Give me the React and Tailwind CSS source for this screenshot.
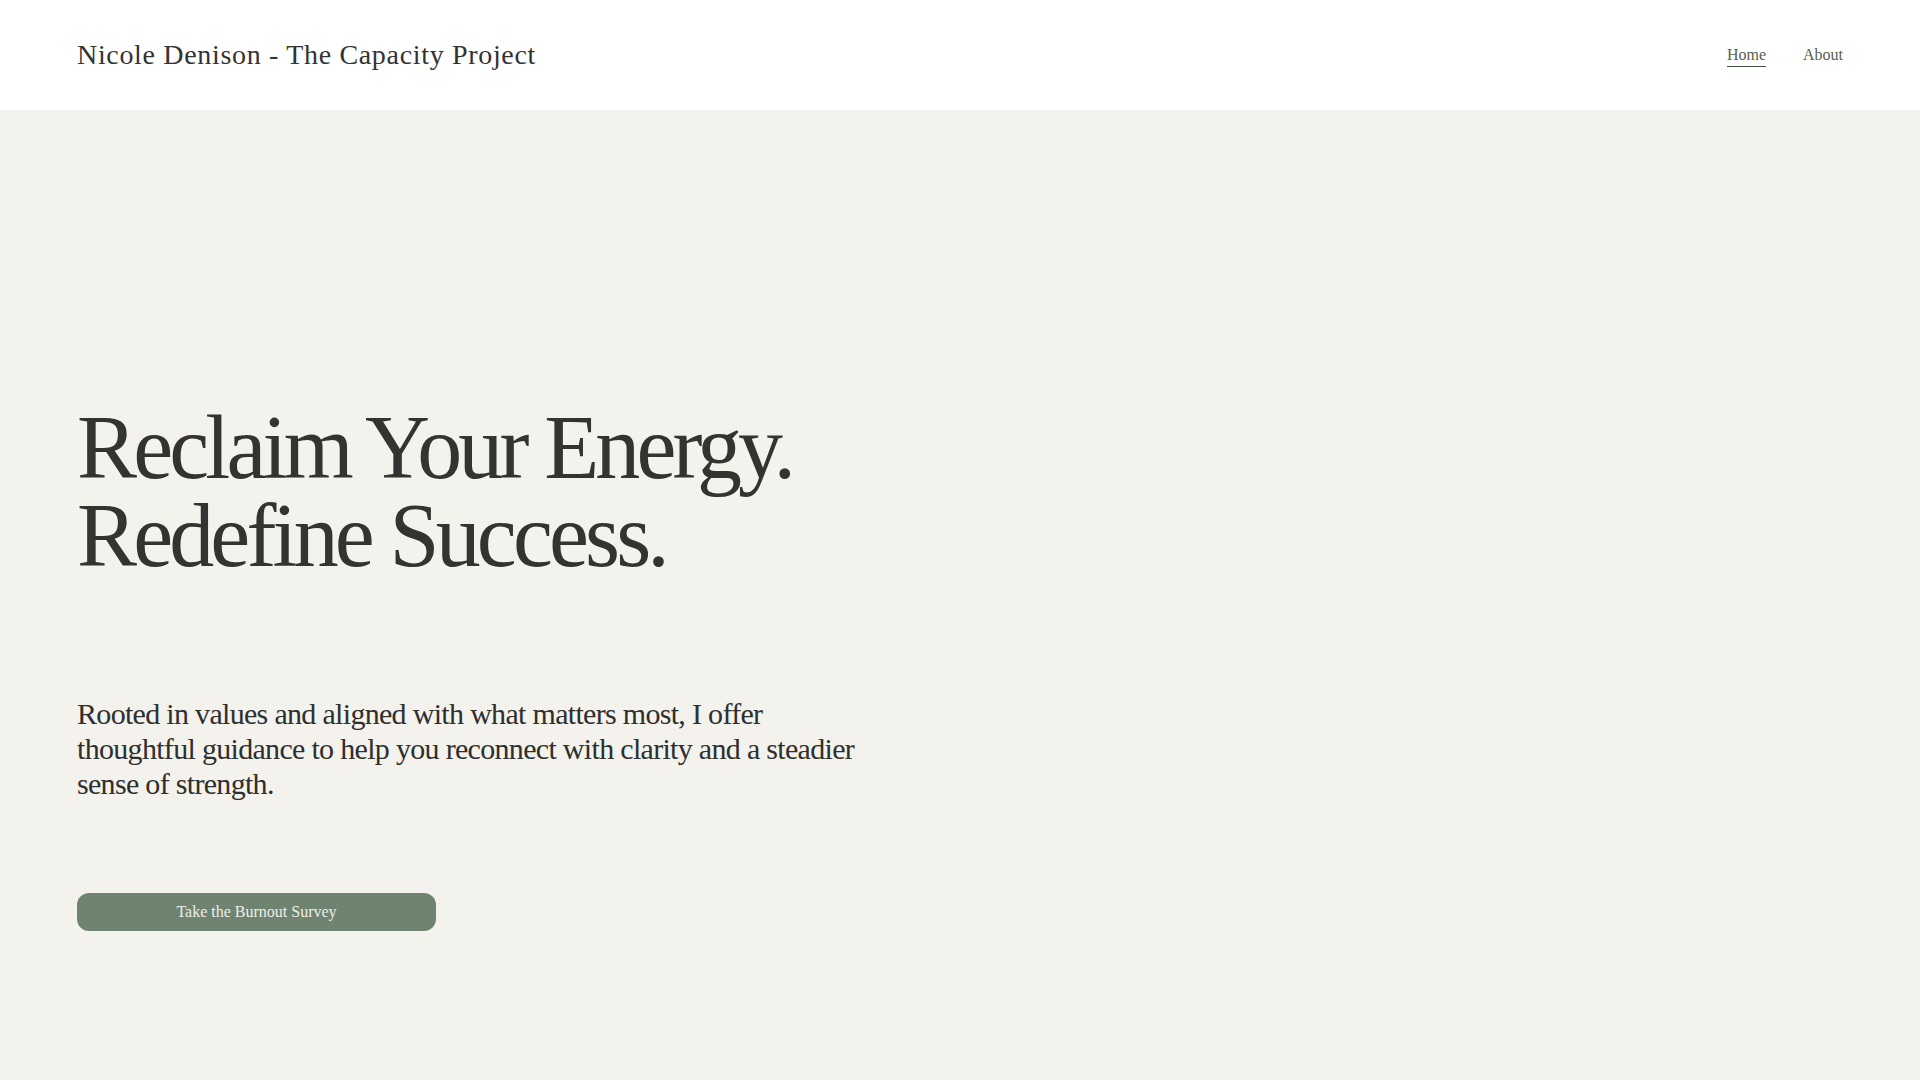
import React from 'react';

const App = () => {
  return (
    <div className="min-h-screen bg-[#f3f2ed] flex flex-col font-['Liberation_Serif',serif] text-[#333331]">
      {/* Header */}
      <header className="h-[110px] bg-white flex items-center justify-between px-[77px]">
        <a href="#" className="text-[28px] tracking-[0.024em] text-[#333331] leading-none">
          Nicole Denison - The Capacity Project
        </a>
        <nav className="flex items-center gap-[37px] text-[16px] text-[#55614f]">
          <a href="#" className="border-b border-[#45543f] pb-[1px] leading-[20px] mt-[2px]">Home</a>
          <a href="#" className="pb-[1px] leading-[20px] mt-[2px] border-b border-transparent">About</a>
        </nav>
      </header>

      {/* Hero */}
      <main className="flex-1 px-[77px] pt-[294px] pb-[149px]">
        <h1 className="text-[90px] leading-[88px] tracking-[-0.043em] text-[#333331]">
          Reclaim Your Energy.
          <br />
          Redefine Success.
        </h1>

        <p className="mt-[116px] max-w-[800px] text-[30px] leading-[35px] tracking-[-0.023em] text-[#2f2f2d]">
          Rooted in values and aligned with what matters most, I offer thoughtful guidance to help you reconnect with clarity and a steadier sense of strength.
        </p>

        <button className="mt-[92px] w-[359px] h-[38px] rounded-xl bg-[#6e8471] text-[#efede6] text-[16px] flex items-center justify-center">
          Take the Burnout Survey
        </button>
      </main>
    </div>
  );
};

export default App;
